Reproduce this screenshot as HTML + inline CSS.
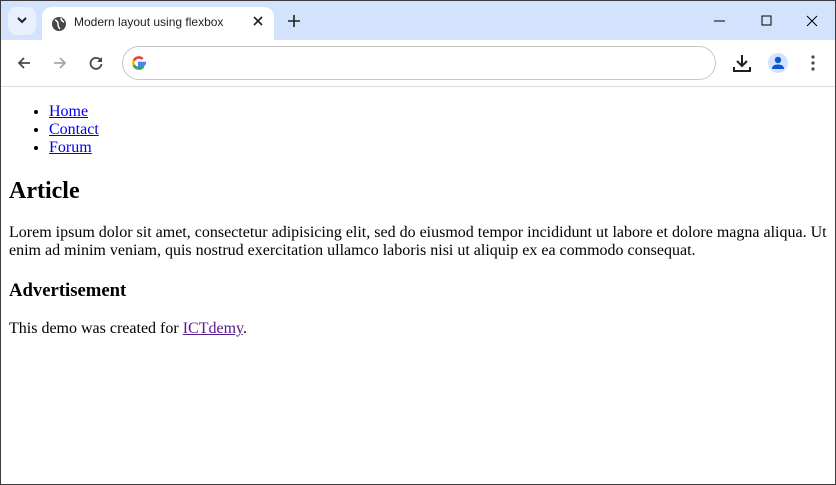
<!DOCTYPE html>
<html><head><style>
*{box-sizing:border-box}
html,body{margin:0;padding:0}
.win{width:836px;height:485px;border:1px solid #3c3c3c;position:relative;overflow:hidden;background:#fff}
.tabs{height:39px;background:#d3e3fd;position:relative}
.tbtn{position:absolute;left:7px;top:6px;width:28px;height:28px;border-radius:8px;background:#e8effd}
.tab{position:absolute;left:41px;top:6px;width:232px;height:34px;background:#fff;border-radius:10px 10px 0 0}
.tab .t{position:absolute;left:32px;top:8px;font:12px "Liberation Sans",sans-serif;color:#1f1f1f}
.toolbar{height:47px;background:#fff;border-bottom:1px solid #dadce0;position:relative}
.omni{position:absolute;left:121px;top:6px;width:594px;height:34px;border:1px solid #c4c7c5;border-radius:17px}
svg{position:absolute}
.content{font-family:"Liberation Serif",serif;font-size:16px;color:#000}
.pg{margin:8px}
ul{margin:16px 0;padding-left:40px}
h1{font-size:24px;margin:20.44px 0 18.44px;line-height:28px}
h3{font-size:18.7px;margin:19.7px 0;line-height:21px}
p{margin:16px 0;line-height:18px}
a{color:#0000ee}
a.v{color:#551a8b}
</style></head><body><div class="win">
<div class="tabs">
<div class="tbtn"></div>
<svg style="left:14px;top:14px" width="14" height="10"><path d="M3 3l4 4 4-4" stroke="#1f1f1f" stroke-width="2" fill="none"/></svg>
<div class="tab"><svg style="left:9px;top:9px" width="16" height="16"><circle cx="8" cy="8" r="7" fill="#474747"/><path d="M4 4q3 1 3 4t2 5M10 2q0 3 3 4" stroke="#fff" stroke-width="1.5" fill="none"/></svg><span class="t">Modern layout using flexbox</span>
<svg style="left:210px;top:8px" width="12" height="12"><path d="M2 2l8 8M10 2l-8 8" stroke="#1f1f1f" stroke-width="1.6"/></svg></div>
<svg style="left:286px;top:13px" width="14" height="14"><path d="M7 1v12M1 7h12" stroke="#1f1f1f" stroke-width="1.6"/></svg>
<svg style="left:712px;top:14px" width="14" height="12"><path d="M1 6h11" stroke="#000" stroke-width="1"/></svg>
<svg style="left:760px;top:14px" width="12" height="12"><rect x="1" y="1" width="9" height="9" stroke="#000" fill="none"/></svg>
<svg style="left:805px;top:14px" width="12" height="12"><path d="M1 1l10 10M11 1l-10 10" stroke="#000"/></svg>
</div>
<div class="toolbar">
<svg style="left:15px;top:15px" width="16" height="16"><path d="M14 8H3M8 3L3 8l5 5" stroke="#474747" stroke-width="1.8" fill="none"/></svg>
<svg style="left:51px;top:15px" width="16" height="16"><path d="M2 8h11M8 3l5 5-5 5" stroke="#a8a8a8" stroke-width="1.8" fill="none"/></svg>
<svg style="left:87px;top:15px" width="16" height="16"><path d="M13 6A5.5 5.5 0 1 0 13.5 9" stroke="#474747" stroke-width="1.8" fill="none"/><path d="M14 2v5H9z" fill="#474747"/></svg>
<div class="omni"></div>
<svg style="left:130px;top:15px" width="16" height="16" viewBox="0 0 16 16"><path d="M15 8H8.2v2.6h4A5.4 5.4 0 0 1 2.8 10" stroke="#4285f4" stroke-width="2.6" fill="none"/><path d="M2.8 10A5.4 5.4 0 0 1 2.9 5.6" stroke="#fbbc05" stroke-width="2.6" fill="none"/><path d="M2.9 5.6A5.4 5.4 0 0 1 11.6 4" stroke="#ea4335" stroke-width="2.6" fill="none"/><path d="M12.3 11.2A5.4 5.4 0 0 1 2.8 10" stroke="#34a853" stroke-width="2.6" fill="none"/></svg>
<svg style="left:732px;top:14px" width="18" height="18"><path d="M9 1v10M4 7l5 5 5-5M1 13v4h16v-4" stroke="#1f1f1f" stroke-width="2" fill="none"/></svg>
<svg style="left:766px;top:12px" width="22" height="22"><circle cx="11" cy="11" r="10" fill="#d3e3fd"/><circle cx="11" cy="8" r="3.2" fill="#0b57d0"/><path d="M5 17q0-4.5 6-4.5t6 4.5z" fill="#0b57d0"/></svg>
<svg style="left:810px;top:15px" width="4" height="16"><circle cx="2" cy="2" r="1.6" fill="#474747"/><circle cx="2" cy="8" r="1.6" fill="#474747"/><circle cx="2" cy="14" r="1.6" fill="#474747"/></svg>
</div>
<div class="content"><div style="padding:1px 0"><div class="pg" style="margin-top:-1px">
<ul><li><a href="#">Home</a></li><li><a href="#">Contact</a></li><li><a href="#">Forum</a></li></ul>
<h1>Article</h1>
<p>Lorem ipsum dolor sit amet, consectetur adipisicing elit, sed do eiusmod tempor incididunt ut labore et dolore magna aliqua. Ut enim ad minim veniam, quis nostrud exercitation ullamco laboris nisi ut aliquip ex ea commodo consequat.</p>
<h3>Advertisement</h3>
<p>This demo was created for <a class="v" href="#">ICTdemy</a>.</p>
</div></div></div>
</div></body></html>
